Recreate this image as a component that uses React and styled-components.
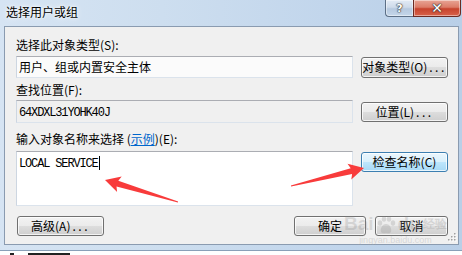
import React from "react";
import styled, { createGlobalStyle, css } from "styled-components";

const Global = createGlobalStyle`
  html, body { margin: 0; padding: 0; background: #ffffff; }
  body { font-family: "Noto Sans CJK SC", "Noto Sans", sans-serif; }
  * { box-sizing: border-box; }
`;

const Screen = styled.div`
  position: relative;
  width: 462px;
  height: 255px;
  overflow: hidden;
  background: #ffffff;
  display: flex;
  flex-direction: column;
`;

const Window = styled.div`
  height: 251px;
  display: flex;
  flex-direction: column;
  padding: 0 3px 5px 4px;
  background: linear-gradient(90deg, #d6e4f3 0%, #cddeef 35%, #c2d6ec 70%, #b9cfe7 100%);
  border-bottom: 1px solid #8aa0b8;
`;

const TitleBar = styled.div`
  height: 26px;
  display: flex;
  align-items: flex-start;
  justify-content: space-between;
`;

const Title = styled.div`
  font-size: 12px;
  line-height: 16px;
  padding: 4px 0 0 2px;
  color: #000;
  text-shadow: 0 0 6px #fff, 0 0 3px #fff;
`;

const Caption = styled.div`
  display: flex;
  margin-right: -2px;
`;

const CapButton = styled.div`
  height: 17px;
  width: ${(p) => p.$w}px;
  display: flex;
  align-items: center;
  justify-content: center;
  border: 1px solid #5c6f86;
  border-top: none;
  ${(p) =>
    p.$close
      ? css`
          border-bottom-right-radius: 4px;
          border-color: #6b2a22;
          background: linear-gradient(#e8a596 0%, #dc7c68 45%, #c7432d 55%, #d8624a 100%);
        `
      : css`
          border-bottom-left-radius: 4px;
          border-right: none;
          background: linear-gradient(#e2ebf5 0%, #cfdbea 45%, #b6c9df 55%, #c4d6ea 100%);
        `}
  box-shadow: inset 0 0 0 1px rgba(255, 255, 255, 0.45);
`;

const Glyph = styled.span`
  font-family: "DejaVu Sans", sans-serif;
  font-weight: bold;
  font-size: ${(p) => p.$size}px;
  line-height: 1;
  color: #fff;
  text-shadow: 0 0 1px #2a2a2a, 0 0 1px #2a2a2a, 0 0 2px #444;
`;

const Panel = styled.div`
  position: relative;
  flex: 1;
  background: #f0f0f0;
  border: 1px solid #8a9bb0;
  padding: 10px 0 0 11px;
  display: flex;
  flex-direction: column;
`;

const Label = styled.div`
  font-size: 12px;
  line-height: 16px;
  height: 16px;
  color: #000;
  margin-top: ${(p) => p.$mt || 0}px;
  white-space: nowrap;
`;

const Link = styled.span`
  color: #0066cc;
  text-decoration: underline;
`;

const Row = styled.div`
  display: grid;
  grid-template-columns: 337px 87px;
  column-gap: 8px;
  align-items: ${(p) => (p.$top ? "start" : "center")};
  margin-top: ${(p) => p.$mt || 0}px;
`;

const Field = styled.div`
  height: ${(p) => p.$h || 22}px;
  padding: ${(p) => (p.$mono ? "4px 0 0 2px" : "2px 0 0 2px")};
  border: 1px solid #dbe3ec;
  border-top-color: #abadb3;
  border-left-color: #cdd6e1;
  background: ${(p) => (p.$ro ? "#f0f0f0" : p.$white ? "#ffffff" : "#fbfbfb")};
  font-size: 12px;
  line-height: 16px;
  color: #000;
  white-space: nowrap;
  ${(p) =>
    p.$mono &&
    css`
      font-family: "Liberation Mono", "DejaVu Sans Mono", monospace;
      letter-spacing: -1.15px;
    `}
`;

const Caret = styled.span`
  display: inline-block;
  width: 1px;
  height: 14px;
  background: #000;
  vertical-align: -3px;
  margin-left: 1px;
`;

const Button = styled.div`
  height: ${(p) => p.$h || 20}px;
  width: ${(p) => p.$w || 87}px;
  margin-top: ${(p) => p.$mt || 0}px;
  border: 1px solid ${(p) => (p.$hot ? "#3c7fb1" : "#707070")};
  border-radius: 3px;
  box-shadow: inset 0 0 0 1px rgba(255, 255, 255, 0.75);
  background: ${(p) =>
    p.$hot
      ? "linear-gradient(#eaf6fd 0%, #d9f0fc 50%, #bee6fd 50%, #a7d9f5 100%)"
      : "linear-gradient(#f2f2f2 0%, #ebebeb 50%, #dddddd 50%, #cfcfcf 100%)"};
  display: flex;
  align-items: center;
  justify-content: center;
  font-size: 12px;
  line-height: 16px;
  color: #000;
  white-space: nowrap;
`;

const Dots = styled.span`
  letter-spacing: 2.5px;
  margin-left: 2px;
`;

const Footer = styled.div`
  display: flex;
  align-items: center;
  margin-top: 10px;
  padding-left: 1px;
`;

const Spacer = styled.div`
  flex: 1;
`;

const FooterRight = styled.div`
  display: flex;
  gap: 9px;
  margin-right: 10px;
`;

const Grip = styled.svg`
  position: absolute;
  right: 1px;
  bottom: 2px;
`;

const Watermark = styled.div`
  position: absolute;
  left: 339px;
  top: 186px;
  opacity: 0.25;
  color: #8a8a8a;
  pointer-events: none;
  display: flex;
  flex-direction: column;
  align-items: center;
  text-shadow: 0 0 1px #fff;
`;

const WmMain = styled.div`
  font-family: "Liberation Sans", sans-serif;
  font-weight: bold;
  font-size: 19px;
  line-height: 22px;
  display: flex;
  align-items: flex-end;
  gap: 2px;
`;

const WmSub = styled.div`
  font-family: "Liberation Sans", sans-serif;
  font-size: 9px;
  line-height: 10px;
`;

const Overlay = styled.svg`
  position: absolute;
  left: 0;
  top: 0;
  pointer-events: none;
`;

const Below = styled.div`
  flex: 1;
  background: #ffffff;
  display: flex;
  align-items: flex-start;
  gap: 14px;
  padding: 2px 0 0 10px;
`;

const Fragment = styled.div`
  height: 2px;
  width: ${(p) => p.$w}px;
  background: #222;
`;

export default function App() {
  return (
    <>
      <Global />
      <Screen>
        <Window>
          <TitleBar>
            <Title>选择用户或组</Title>
            <Caption>
              <CapButton $w={28}>
                <Glyph $size={11}>?</Glyph>
              </CapButton>
              <CapButton $w={48} $close>
                <Glyph $size={14}>✕</Glyph>
              </CapButton>
            </Caption>
          </TitleBar>
          <Panel>
            <Label>选择此对象类型(S):</Label>
            <Row $mt={3}>
              <Field>用户、组或内置安全主体</Field>
              <Button $h={21}>
                对象类型(O)<Dots>...</Dots>
              </Button>
            </Row>
            <Label $mt={4}>查找位置(F):</Label>
            <Row $mt={2}>
              <Field $ro $mono $h={23}>64XDXL31YOHK40J</Field>
              <Button>
                位置(L)<Dots>...</Dots>
              </Button>
            </Row>
            <Label $mt={8}>
              输入对象名称来选择 (<Link>示例</Link>)(E):
            </Label>
            <Row $mt={4} $top>
              <Field $white $mono $h={55}>
                LOCAL SERVICE
                <Caret />
              </Field>
              <Button $hot $mt={1}>检查名称(C)</Button>
            </Row>
            <Footer>
              <Button>
                高级(A)<Dots>...</Dots>
              </Button>
              <Spacer />
              <FooterRight>
                <Button $w={72}>确定</Button>
                <Button $w={73}>取消</Button>
              </FooterRight>
            </Footer>
            <Grip width="10" height="10" viewBox="0 0 10 10">
              {[
                [8, 2],
                [8, 5],
                [5, 5],
                [8, 8],
                [5, 8],
                [2, 8],
              ].map(([x, y], i) => (
                <g key={i}>
                  <rect x={x} y={y} width="1.5" height="1.5" fill="#ffffff" />
                  <rect x={x - 1} y={y - 1} width="1.5" height="1.5" fill="#a0a0a0" />
                </g>
              ))}
            </Grip>
            <Watermark>
              <WmMain>
                <span>Bai</span>
                <svg width="20" height="20" viewBox="0 0 20 20">
                  <ellipse cx="4" cy="8" rx="2.2" ry="2.8" fill="#8a8a8a" />
                  <ellipse cx="8" cy="4" rx="2.2" ry="2.8" fill="#8a8a8a" />
                  <ellipse cx="13" cy="4" rx="2.2" ry="2.8" fill="#8a8a8a" />
                  <ellipse cx="17" cy="8" rx="2.2" ry="2.8" fill="#8a8a8a" />
                  <path d="M10 9 C6 9 4 14 5 17 C6 19 9 18 10 18 C11 18 14 19 15 17 C16 14 14 9 10 9Z" fill="#8a8a8a" />
                </svg>
                <span>du</span>
                <span style={{ fontSize: 12 }}>经验</span>
              </WmMain>
              <WmSub>jingyan.baidu.com</WmSub>
            </Watermark>
          </Panel>
        </Window>
        <Below>
          <Fragment $w={4} />
          <Fragment $w={42} />
        </Below>
        <Overlay width="462" height="255" viewBox="0 0 462 255">
          <polygon
            points="105,180 121.7,176.6 118.3,180.8 178.1,201.5 177.9,202.5 116.5,186.6 117.1,192"
            fill="#f83b3b"
          />
          <polygon
            points="364,168 347.5,163.8 350.7,168.2 290.9,185.5 291.1,186.5 352.1,174 351.3,179.4"
            fill="#f83b3b"
          />
        </Overlay>
      </Screen>
    </>
  );
}
